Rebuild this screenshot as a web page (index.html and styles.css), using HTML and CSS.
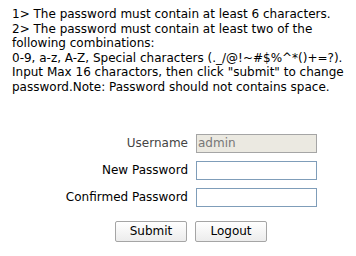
FILE: index.html
```html
<!DOCTYPE html>
<html lang="en">
<head>
    <meta charset="UTF-8">
    <title>Change Password</title>
    <link rel="stylesheet" href="styles.css">
</head>
<body>
    <div class="notes">
        1&gt; The password must contain at least 6 characters.<br>
        2&gt; The password must contain at least two of the following combinations:<br>
        0-9, a-z, A-Z, Special characters (._/@!~#$%^*()+=?).<br>
        Input Max 16 charactors, then click "submit" to change password.Note: Password should not contains space.
    </div>

    <form class="pwd-form" onsubmit="return false;">
        <div class="row">
            <label class="label label-muted">Username</label>
            <input class="field field-readonly" type="text" value="admin" readonly>
        </div>
        <div class="row">
            <label class="label">New Password</label>
            <input class="field" type="password" maxlength="16">
        </div>
        <div class="row">
            <label class="label">Confirmed Password</label>
            <input class="field" type="password" maxlength="16">
        </div>
        <div class="buttons">
            <button class="btn" type="submit">Submit</button>
            <button class="btn" type="button">Logout</button>
        </div>
    </form>
</body>
</html>
```

FILE: styles.css
```css
* {
    margin: 0;
    padding: 0;
    box-sizing: border-box;
}

body {
    font-family: "DejaVu Sans", Verdana, sans-serif;
    font-size: 12px;
    color: #000;
    background: #fff;
    width: 356px;
    height: 256px;
    overflow: hidden;
}

.notes {
    padding: 7px 0 0 12px;
    width: 352px;
    line-height: 14.6px;
}

.pwd-form {
    margin-top: 39px;
    display: flex;
    flex-direction: column;
}

.row {
    display: grid;
    grid-template-columns: 188px 121px;
    column-gap: 8px;
    align-items: center;
    height: 19px;
    margin-bottom: 8px;
}

.label {
    text-align: right;
    color: #000;
}

.label-muted {
    color: #444;
}

.field {
    height: 19px;
    width: 121px;
    border: 1px solid #7f9db9;
    background: #fff;
    font-family: inherit;
    font-size: 12px;
    padding: 0 1px;
}

.field-readonly {
    background: #ebe9e1;
    border-color: #a5a5a5;
    color: #777;
}

.buttons {
    display: flex;
    gap: 8px;
    padding-left: 115px;
    margin-top: 6px;
}

.btn {
    width: 72px;
    height: 21px;
    border: 1px solid #a5a5a5;
    border-radius: 2px;
    background: linear-gradient(#ffffff, #ececec);
    font-family: inherit;
    font-size: 12px;
    color: #000;
}
```
